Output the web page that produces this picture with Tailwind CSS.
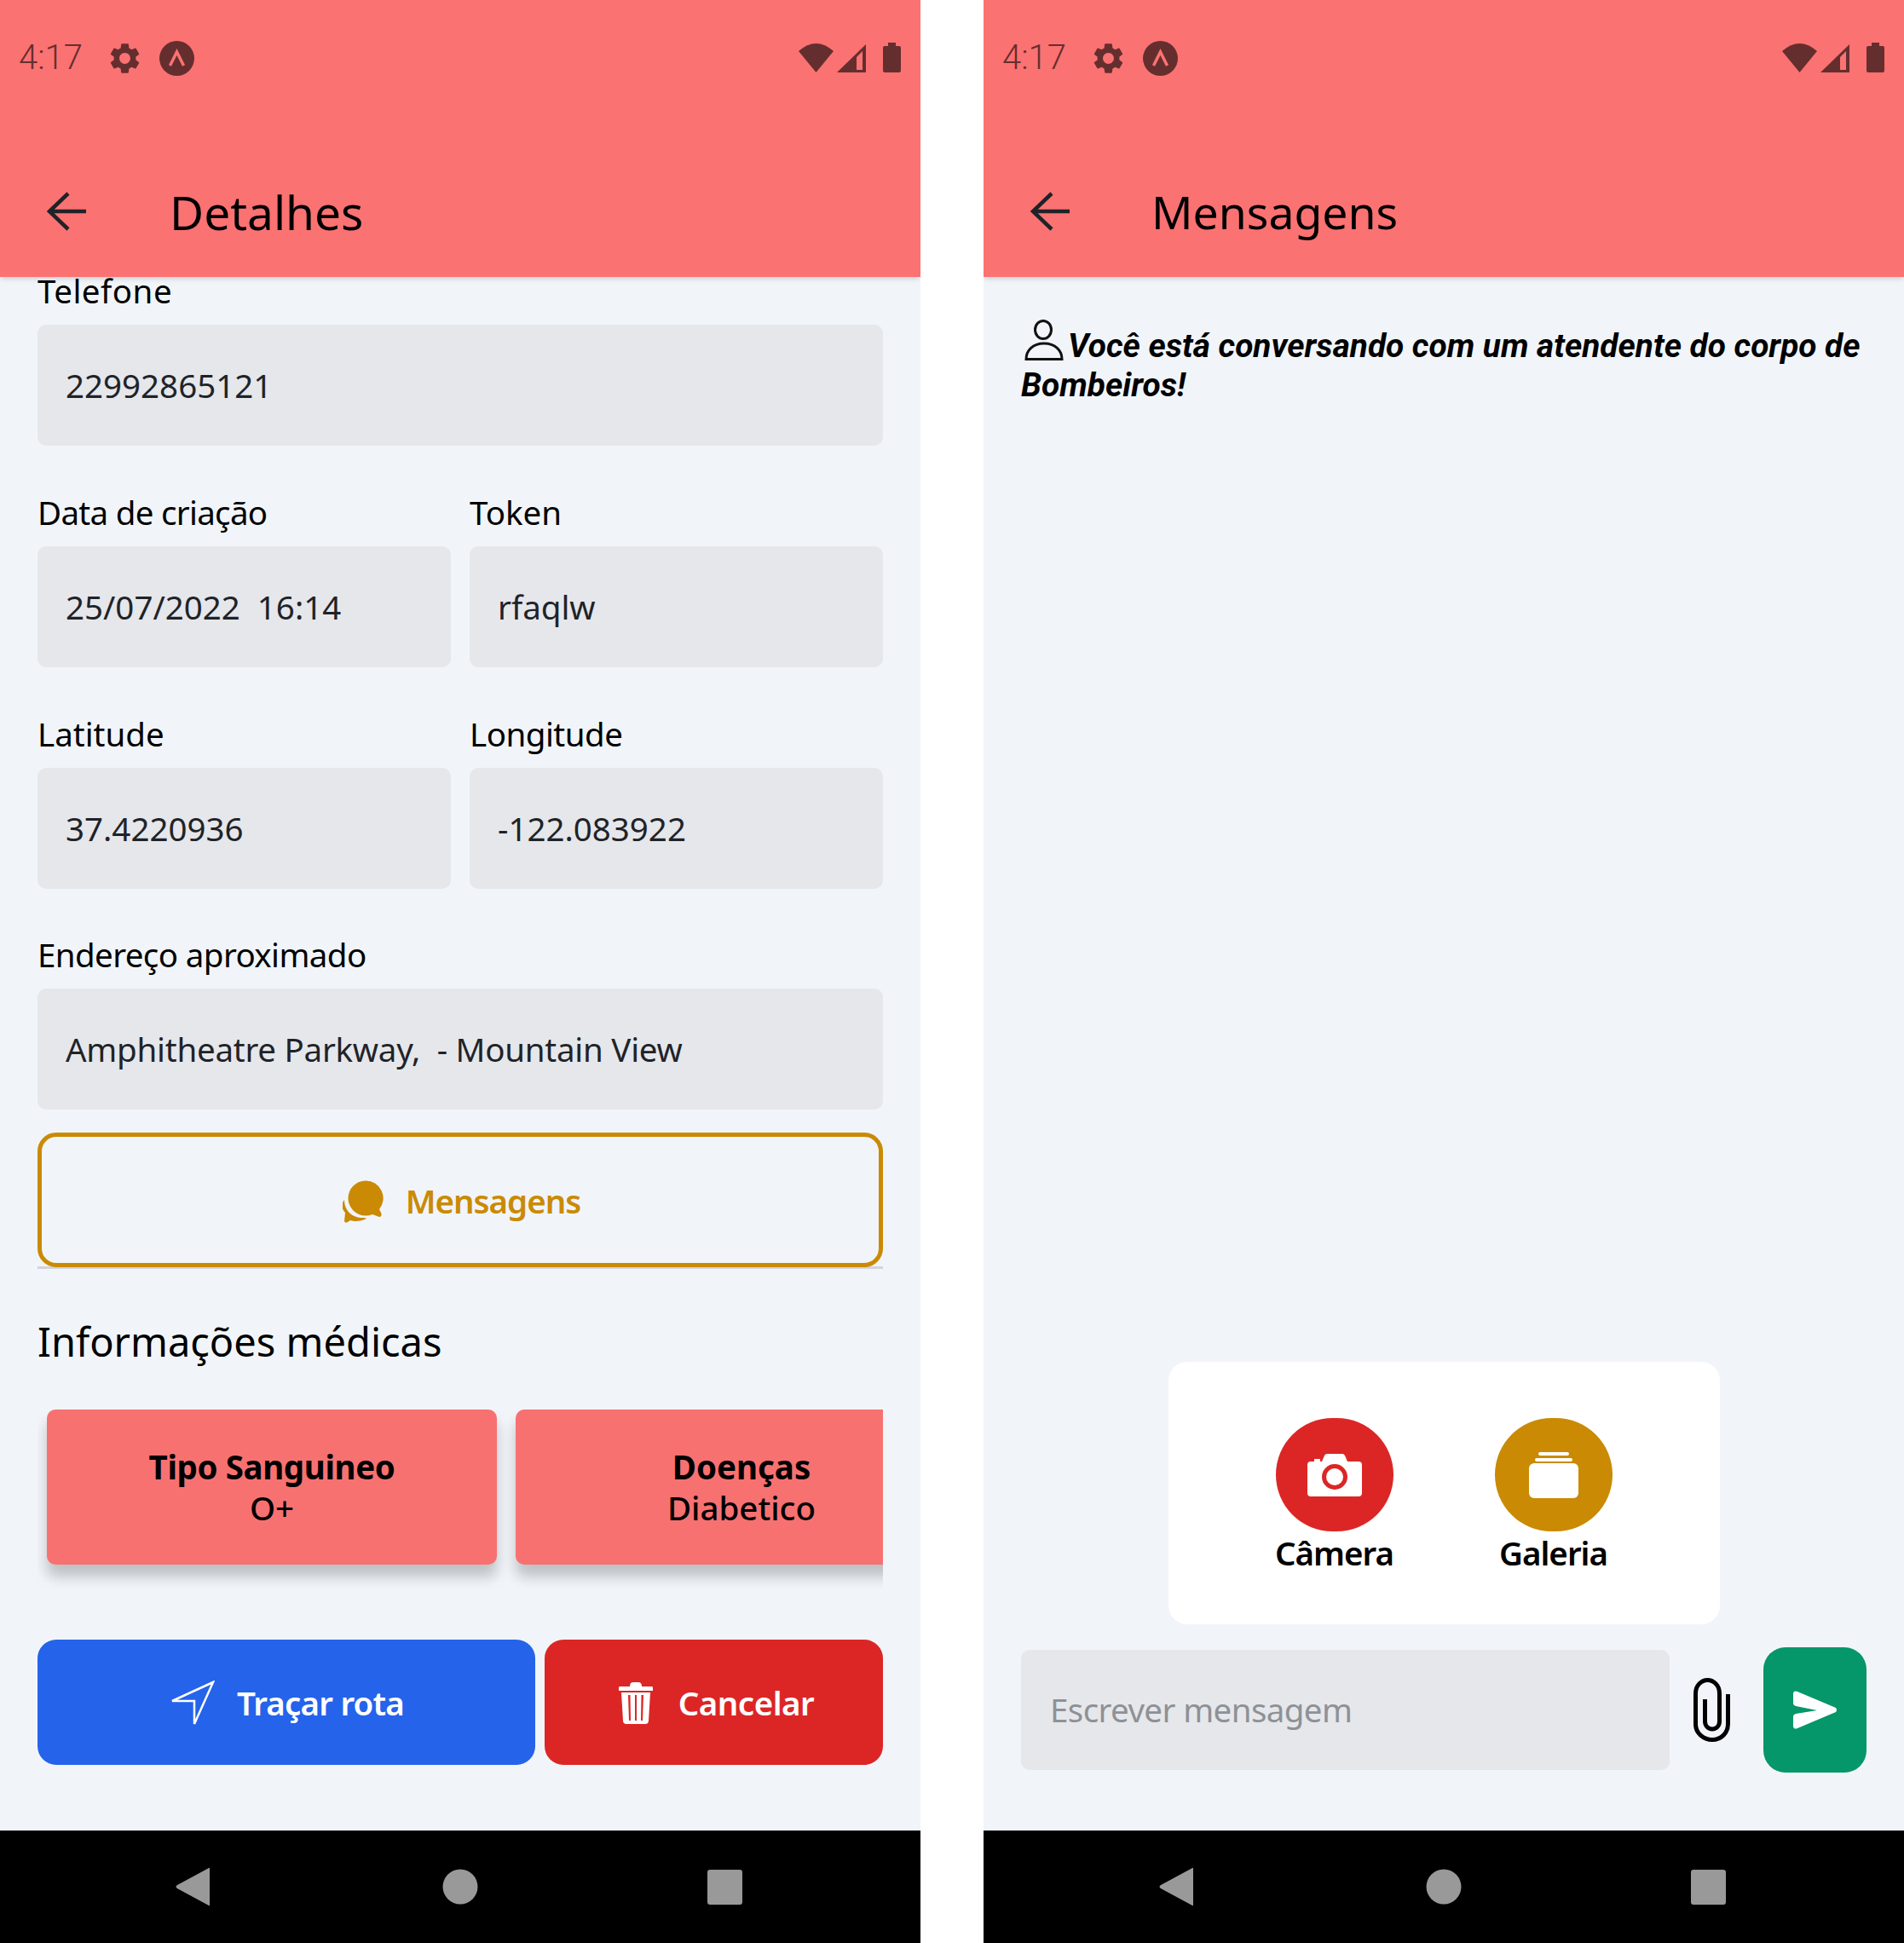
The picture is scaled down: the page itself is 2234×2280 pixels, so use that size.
<!DOCTYPE html>
<html lang="en">
<head>
    <meta charset="UTF-8">
    <meta name="viewport" content="width=device-width, initial-scale=1.0">
    <title>Detalhes e Mensagens</title>
    <script src="https://cdn.jsdelivr.net/npm/@tailwindcss/browser@4"></script>
</head>
<body class="bg-white font-['Noto_Sans',sans-serif]">
    <div class="flex justify-between w-[2234px] h-[2280px]">

        <!-- Detalhes -->
        <div class="flex flex-col w-[1080px] h-full bg-slate-100 overflow-hidden">
            <header class="relative z-10 h-[325px] shrink-0 bg-[#fb7272] shadow-md">
                <div class="flex items-center justify-between h-[136px] pl-[22px] pr-[22px]">
                    <div class="flex items-center">
                        <span class="w-[103px] font-['Roboto',sans-serif] font-light text-[40px] text-[#652e2e]">4:17</span>
                        <svg class="w-[43px] h-[43px] text-[#652e2e]" viewBox="0 0 24 24" fill="currentColor"><path d="M19.14 12.94c.04-.3.06-.61.06-.94 0-.32-.02-.64-.07-.94l2.03-1.58c.18-.14.23-.41.12-.61l-1.92-3.32c-.12-.22-.37-.29-.59-.22l-2.39.96c-.5-.38-1.03-.7-1.62-.94l-.36-2.54c-.04-.24-.24-.41-.48-.41h-3.84c-.24 0-.43.17-.47.41l-.36 2.54c-.59.24-1.13.57-1.62.94l-2.39-.96c-.22-.08-.47 0-.59.22L2.74 8.87c-.12.21-.08.47.12.61l2.03 1.58c-.05.3-.09.63-.09.94s.02.64.07.94l-2.03 1.58c-.18.14-.23.41-.12.61l1.92 3.32c.12.22.37.29.59.22l2.39-.96c.5.38 1.03.7 1.62.94l.36 2.54c.05.24.24.41.48.41h3.84c.24 0 .44-.17.47-.41l.36-2.54c.59-.24 1.13-.56 1.62-.94l2.39.96c.22.08.47 0 .59-.22l1.92-3.32c.12-.22.07-.47-.12-.61l-2.01-1.58zM12 15.6c-1.98 0-3.6-1.62-3.6-3.6s1.62-3.6 3.6-3.6 3.6 1.62 3.6 3.6-1.62 3.6-3.6 3.6z"/></svg>
                        <svg class="w-[41px] h-[41px] ml-[19px]" viewBox="0 0 41 41"><circle cx="20.5" cy="20.5" r="20.5" fill="#652e2e"/><path d="M12.5 29 20.5 13 28.5 29" fill="none" stroke="#fb7272" stroke-width="3.5"/></svg>
                    </div>
                    <svg class="w-[121px] h-[36px] mr-0" viewBox="938 49 121 36" fill="#652e2e"><path d="M938 59 Q958.5 41 979 59 L958.5 84Z"/><path fill-rule="evenodd" d="M983 84 1017 51V84ZM1006 66V81H1013V59Z"/><path d="M1043 49H1052V53H1056Q1058 53 1058 55V82Q1058 84 1056 84H1039Q1037 84 1037 82V55Q1037 53 1039 53H1043Z"/></svg>
                </div>
                <div class="flex items-center h-[189px] pt-[35px] pl-[55px]">
                    <svg class="w-[47px] h-[46px]" viewBox="0 0 47 46" fill="none" stroke="#1f2328" stroke-width="4.5"><path d="M46 23H3M25 2 3 23 25 44"/></svg>
                    <h1 class="ml-[97px] pt-[3px] text-[55px] text-black">Detalhes</h1>
                </div>
            </header>

            <main class="flex-1 px-[44px] -mt-[8px] text-[38.5px] text-black">
                <label class="block h-[50px] leading-[48px] mb-[14px] tracking-[0.5px]">Telefone</label>
                <div class="flex items-center h-[142px] pt-[2px] pl-[33px] rounded-[10px] bg-gray-200 text-[#1f2328]">22992865121</div>

                <div class="grid grid-cols-2 gap-x-[22px] mt-[54px]">
                    <div>
                        <label class="block h-[50px] leading-[48px] mb-[14px] tracking-[-0.7px]">Data de criação</label>
                        <div class="flex items-center h-[142px] pt-[2px] pl-[33px] rounded-[10px] bg-gray-200 text-[#1f2328]">25/07/2022&nbsp; 16:14</div>
                    </div>
                    <div>
                        <label class="block h-[50px] leading-[48px] mb-[14px]">Token</label>
                        <div class="flex items-center h-[142px] pt-[2px] pl-[33px] rounded-[10px] bg-gray-200 text-[#1f2328]">rfaqlw</div>
                    </div>
                </div>

                <div class="grid grid-cols-2 gap-x-[22px] mt-[54px]">
                    <div>
                        <label class="block h-[50px] leading-[48px] mb-[14px]">Latitude</label>
                        <div class="flex items-center h-[142px] pt-[2px] pl-[33px] rounded-[10px] bg-gray-200 text-[#1f2328]">37.4220936</div>
                    </div>
                    <div>
                        <label class="block h-[50px] leading-[48px] mb-[14px] tracking-[-0.5px]">Longitude</label>
                        <div class="flex items-center h-[142px] pt-[2px] pl-[33px] rounded-[10px] bg-gray-200 text-[#1f2328]">-122.083922</div>
                    </div>
                </div>

                <label class="block h-[50px] leading-[48px] mb-[14px] mt-[53px] tracking-[-0.6px]">Endereço aproximado</label>
                <div class="flex items-center h-[142px] pt-[2px] pl-[33px] rounded-[10px] bg-gray-200 text-[#1f2328] tracking-[-0.25px]">Amphitheatre Parkway,&nbsp; - Mountain View</div>

                <div class="mt-[27px] border-b-[3px] border-gray-300">
                    <button class="flex items-center justify-center gap-[26px] w-full h-[158px] -mb-[1px] pl-[3px] pt-[4px] rounded-[22px] border-[5px] border-[#ca8a04] font-semibold text-[#ca8a04] tracking-[-1px]">
                        <svg class="w-[48px] h-[54px]" viewBox="24 20 48 54" fill="#ca8a04"><path d="M51 22.500A20.500 20.500 0 1 0 51 63.500 20.500 20.500 0 0 0 59 62L67 65Q70 65 69.500 61L67 56A20.500 20.500 0 0 0 51 22.500Z"/><path d="M26 45C22 50 23 56 27 60L26 70C27 72 28 72 30 71L33 69C38 71 46 70 52 67L50 66C36 67 26 58 26 45Z"/></svg>
                        Mensagens
                    </button>
                </div>

                <h2 class="mt-[50px] h-[70px] leading-[70px] text-[47px]">Informações médicas</h2>

                <div class="flex gap-[22px] w-[992px] mt-[45px] pl-[11px] pb-[34px] overflow-hidden text-center">
                    <div class="flex flex-col justify-center w-[528px] h-[182px] shrink-0 rounded-[10px] bg-[#f87171] shadow-[0_14px_16px_rgba(0,0,0,0.22)] leading-[48px]">
                        <strong class="font-bold tracking-[-0.4px]">Tipo Sanguineo</strong>
                        <span class="font-medium">O+</span>
                    </div>
                    <div class="flex flex-col justify-center w-[530px] h-[182px] shrink-0 rounded-[10px] bg-[#f87171] shadow-[0_14px_16px_rgba(0,0,0,0.22)] leading-[48px]">
                        <strong class="font-bold">Doenças</strong>
                        <span class="font-medium">Diabetico</span>
                    </div>
                </div>

                <div class="flex gap-[11px] mt-[54px] font-semibold text-white">
                    <button class="flex items-center justify-center gap-[26px] w-[584px] h-[147px] pt-[2px] rounded-[22px] bg-[#2563eb] tracking-[-0.8px]">
                        <svg class="w-[54px] h-[55px]" viewBox="200 1972 54 55" fill="none" stroke="#fff" stroke-width="2.500"><path d="M252 1975 204 1997H230V2024Z"/></svg>
                        Traçar rota
                    </button>
                    <button class="flex items-center justify-center gap-[30px] w-[397px] h-[147px] pt-[2px] pl-[6px] rounded-[22px] bg-[#dc2626] tracking-[-0.5px]">
                        <svg class="w-[40px] h-[49px]" viewBox="0 0 40 49" fill="#fff"><path d="M13 5Q13 0 17 0H23Q27 0 27 5H39Q40 5 40 7V10H0V7Q0 5 1 5Z"/><path fill-rule="evenodd" d="M3 12H37L35 45Q35 49 31 49H9Q5 49 5 45ZM11 15 12 45H14L13.500 15ZM19 15V45H21V15ZM26.500 15 26 45H28L29 15Z"/></svg>
                        Cancelar
                    </button>
                </div>
            </main>

            <nav class="flex items-center h-[132px] shrink-0 bg-black">
                <svg class="w-[1080px] h-[132px]" viewBox="0 2148 1080 132" fill="#999"><path d="M245 2192Q246 2191 246 2193V2235Q246 2237 245 2236L208 2216Q205 2214 208 2212Z"/><circle cx="540" cy="2214" r="20.500"/><rect x="830" y="2194" width="41" height="41" rx="3"/></svg>
            </nav>
        </div>

        <!-- Mensagens -->
        <div class="flex flex-col w-[1080px] h-full bg-slate-100 overflow-hidden">
            <header class="relative z-10 h-[325px] shrink-0 bg-[#fb7272] shadow-md">
                <div class="flex items-center justify-between h-[136px] pl-[22px] pr-[22px]">
                    <div class="flex items-center">
                        <span class="w-[103px] font-['Roboto',sans-serif] font-light text-[40px] text-[#652e2e]">4:17</span>
                        <svg class="w-[43px] h-[43px] text-[#652e2e]" viewBox="0 0 24 24" fill="currentColor"><path d="M19.14 12.94c.04-.3.06-.61.06-.94 0-.32-.02-.64-.07-.94l2.03-1.58c.18-.14.23-.41.12-.61l-1.92-3.32c-.12-.22-.37-.29-.59-.22l-2.39.96c-.5-.38-1.03-.7-1.62-.94l-.36-2.54c-.04-.24-.24-.41-.48-.41h-3.84c-.24 0-.43.17-.47.41l-.36 2.54c-.59.24-1.13.57-1.62.94l-2.39-.96c-.22-.08-.47 0-.59.22L2.74 8.87c-.12.21-.08.47.12.61l2.03 1.58c-.05.3-.09.63-.09.94s.02.64.07.94l-2.03 1.58c-.18.14-.23.41-.12.61l1.92 3.32c.12.22.37.29.59.22l2.39-.96c.5.38 1.03.7 1.62.94l.36 2.54c.05.24.24.41.48.41h3.84c.24 0 .44-.17.47-.41l.36-2.54c.59-.24 1.13-.56 1.62-.94l2.39.96c.22.08.47 0 .59-.22l1.92-3.32c.12-.22.07-.47-.12-.61l-2.01-1.58zM12 15.6c-1.98 0-3.6-1.62-3.6-3.6s1.62-3.6 3.6-3.6 3.6 1.62 3.6 3.6-1.62 3.6-3.6 3.6z"/></svg>
                        <svg class="w-[41px] h-[41px] ml-[19px]" viewBox="0 0 41 41"><circle cx="20.5" cy="20.5" r="20.5" fill="#652e2e"/><path d="M12.5 29 20.5 13 28.5 29" fill="none" stroke="#fb7272" stroke-width="3.5"/></svg>
                    </div>
                    <svg class="w-[121px] h-[36px]" viewBox="938 49 121 36" fill="#652e2e"><path d="M938 59 Q958.5 41 979 59 L958.5 84Z"/><path fill-rule="evenodd" d="M983 84 1017 51V84ZM1006 66V81H1013V59Z"/><path d="M1043 49H1052V53H1056Q1058 53 1058 55V82Q1058 84 1056 84H1039Q1037 84 1037 82V55Q1037 53 1039 53H1043Z"/></svg>
                </div>
                <div class="flex items-center h-[189px] pt-[35px] pl-[55px]">
                    <svg class="w-[47px] h-[46px]" viewBox="0 0 47 46" fill="none" stroke="#1f2328" stroke-width="4.5"><path d="M46 23H3M25 2 3 23 25 44"/></svg>
                    <h1 class="ml-[95px] pt-[3px] text-[53.5px] text-black">Mensagens</h1>
                </div>
            </header>

            <main class="flex flex-col flex-1 px-[44px] text-[38.5px] text-black">
                <p class="pt-[50px] font-['Roboto',sans-serif] font-bold italic text-[38.8px] leading-[46px]">
                    <svg class="inline-block w-[46px] h-[48px] ml-[4px] mr-[5px] align-[-4px]" viewBox="0 0 46 48" fill="none" stroke="#111" stroke-width="3"><ellipse cx="22" cy="12" rx="9.500" ry="10.500"/><path d="M2 46.500H44C44 36 36 28 23 28S2 36 2 46.500Z"/></svg>Você está conversando com um atendente do corpo de Bombeiros!
                </p>

                <div class="mt-auto mx-auto flex justify-center gap-[119px] w-[647px] h-[308px] pt-[66px] rounded-[22px] bg-white font-semibold tracking-[-1px]">
                    <div class="flex flex-col items-center w-[138px]">
                        <div class="flex items-center justify-center w-[138px] h-[133px] rounded-full bg-[#dc2626]">
                            <svg class="w-[64px] h-[50px]" viewBox="0 0 64 50" fill="#fff"><path fill-rule="evenodd" d="M17 9 20 2Q21 0 23 0H41Q43 0 44 2L47 9H60Q64 9 64 13V46Q64 50 60 50H4Q0 50 0 46V13Q0 9 4 9H8V6H15V9ZM32 12A15 15 0 1 0 32 42 15 15 0 0 0 32 12Z"/><circle cx="32" cy="27" r="10"/></svg>
                        </div>
                        <span class="h-[50px] leading-[50px] whitespace-nowrap">Câmera</span>
                    </div>
                    <div class="flex flex-col items-center w-[138px]">
                        <div class="flex items-center justify-center w-[138px] h-[133px] rounded-full bg-[#ca8a04]">
                            <svg class="w-[58px] h-[54px]" viewBox="0 0 58 54" fill="#fff"><rect x="11" y="0" width="36" height="4" rx="2"/><rect x="7" y="7" width="44" height="4" rx="2"/><rect x="0" y="13" width="58" height="41" rx="6"/></svg>
                        </div>
                        <span class="h-[50px] leading-[50px] whitespace-nowrap">Galeria</span>
                    </div>
                </div>

                <div class="flex items-center mt-[27px] mb-[68px]">
                    <div class="flex items-center w-[761px] h-[141px] pl-[34px] rounded-[10px] bg-gray-200 text-[#8e9196] tracking-[-0.6px]">Escrever mensagem</div>
                    <svg class="w-[43px] h-[75px] ml-[28px]" viewBox="0 0 43 75" fill="none" stroke="#000" stroke-width="5"><path d="M40.500 19V54C40.500 65 32 72.500 22 72.500S2.500 65 2.500 54V18C2.500 9 9 2.500 16.500 2.500S30.500 9 30.500 18V51C30.500 56 27 60 22 60S13.500 56 13.500 51V25"/></svg>
                    <button class="flex items-center justify-center w-[121px] h-[147px] ml-[39px] rounded-[26px] bg-[#059669]">
                        <svg class="w-[52px] h-[45px]" viewBox="0 0 52 45" fill="#fff"><path d="M0 4Q0 -1 5 1L50 20Q52 22.500 50 25L5 44Q0 46 0 41V30Q0 28 3 27L28 23 3 18Q0 17 0 15Z"/></svg>
                    </button>
                </div>
            </main>

            <nav class="flex items-center h-[132px] shrink-0 bg-black">
                <svg class="w-[1080px] h-[132px]" viewBox="0 2148 1080 132" fill="#999"><path d="M245 2192Q246 2191 246 2193V2235Q246 2237 245 2236L208 2216Q205 2214 208 2212Z"/><circle cx="540" cy="2214" r="20.500"/><rect x="830" y="2194" width="41" height="41" rx="3"/></svg>
            </nav>
        </div>
    </div>
</body>
</html>
